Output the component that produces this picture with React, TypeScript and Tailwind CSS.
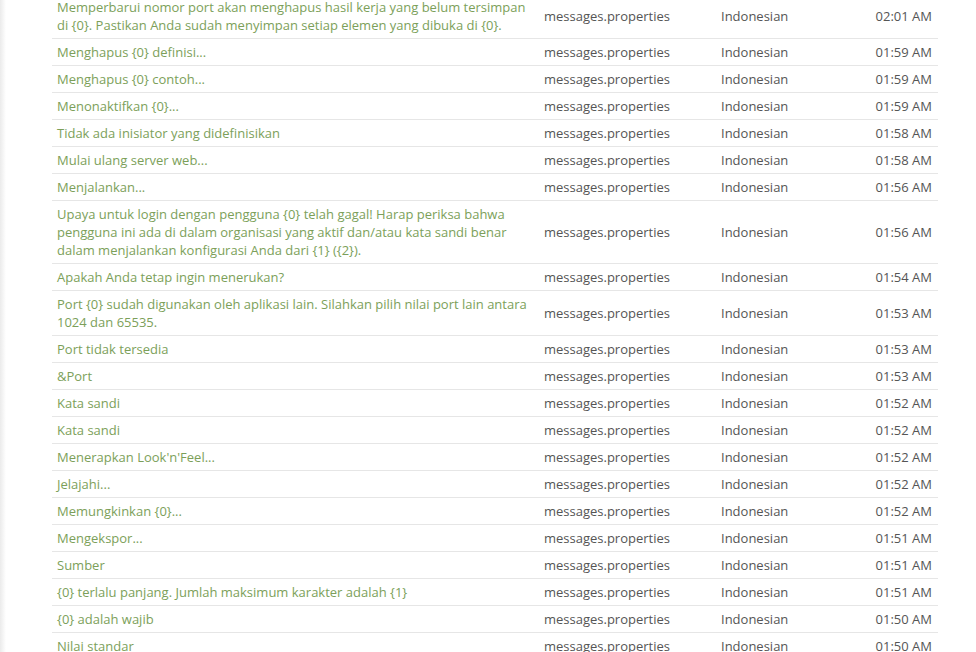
const rows: { text: string; time: string }[] = [
  { text: "Memperbarui nomor port akan menghapus hasil kerja yang belum tersimpan di {0}. Pastikan Anda sudah menyimpan setiap elemen yang dibuka di {0}.", time: "02:01 AM" },
  { text: "Menghapus {0} definisi...", time: "01:59 AM" },
  { text: "Menghapus {0} contoh...", time: "01:59 AM" },
  { text: "Menonaktifkan {0}...", time: "01:59 AM" },
  { text: "Tidak ada inisiator yang didefinisikan", time: "01:58 AM" },
  { text: "Mulai ulang server web...", time: "01:58 AM" },
  { text: "Menjalankan...", time: "01:56 AM" },
  { text: "Upaya untuk login dengan pengguna {0} telah gagal! Harap periksa bahwa pengguna ini ada di dalam organisasi yang aktif dan/atau kata sandi benar dalam menjalankan konfigurasi Anda dari {1} ({2}).", time: "01:56 AM" },
  { text: "Apakah Anda tetap ingin menerukan?", time: "01:54 AM" },
  { text: "Port {0} sudah digunakan oleh aplikasi lain. Silahkan pilih nilai port lain antara 1024 dan 65535.", time: "01:53 AM" },
  { text: "Port tidak tersedia", time: "01:53 AM" },
  { text: "&Port", time: "01:53 AM" },
  { text: "Kata sandi", time: "01:52 AM" },
  { text: "Kata sandi", time: "01:52 AM" },
  { text: "Menerapkan Look'n'Feel...", time: "01:52 AM" },
  { text: "Jelajahi...", time: "01:52 AM" },
  { text: "Memungkinkan {0}...", time: "01:52 AM" },
  { text: "Mengekspor...", time: "01:51 AM" },
  { text: "Sumber", time: "01:51 AM" },
  { text: "{0} terlalu panjang. Jumlah maksimum karakter adalah {1}", time: "01:51 AM" },
  { text: "{0} adalah wajib", time: "01:50 AM" },
  { text: "Nilai standar", time: "01:50 AM" },
];

export default function App() {
  return (
    <div className="flex h-[652px] w-[976px] overflow-hidden bg-white font-['Open_Sans',sans-serif] text-[13px] leading-[18px]">
      <div className="w-[6px] shrink-0 bg-gradient-to-r from-[#ebebeb] to-white" />
      <div className="flex-1 pl-[46px] pr-[38px]">
        <table className="-mt-[6px] w-[886px] table-fixed border-collapse">
          <colgroup>
            <col className="w-[487px]" />
            <col className="w-[177px]" />
            <col className="w-[130px]" />
            <col />
          </colgroup>
          <tbody>
            {rows.map((row, i) => (
              <tr key={i} className="border-b border-[#e6e6e6]">
                <td className="pt-[4px] pb-[4px] pl-[5px] pr-[8px] align-middle text-[#7c9f5a]">{row.text}</td>
                <td className="py-[4px] pl-[5px] align-middle text-[#555555]">messages.properties</td>
                <td className="py-[4px] pl-[5px] align-middle text-[#555555]">Indonesian</td>
                <td className="py-[4px] pr-[6px] text-right align-middle text-[#555555]">{row.time}</td>
              </tr>
            ))}
          </tbody>
        </table>
      </div>
    </div>
  );
}
